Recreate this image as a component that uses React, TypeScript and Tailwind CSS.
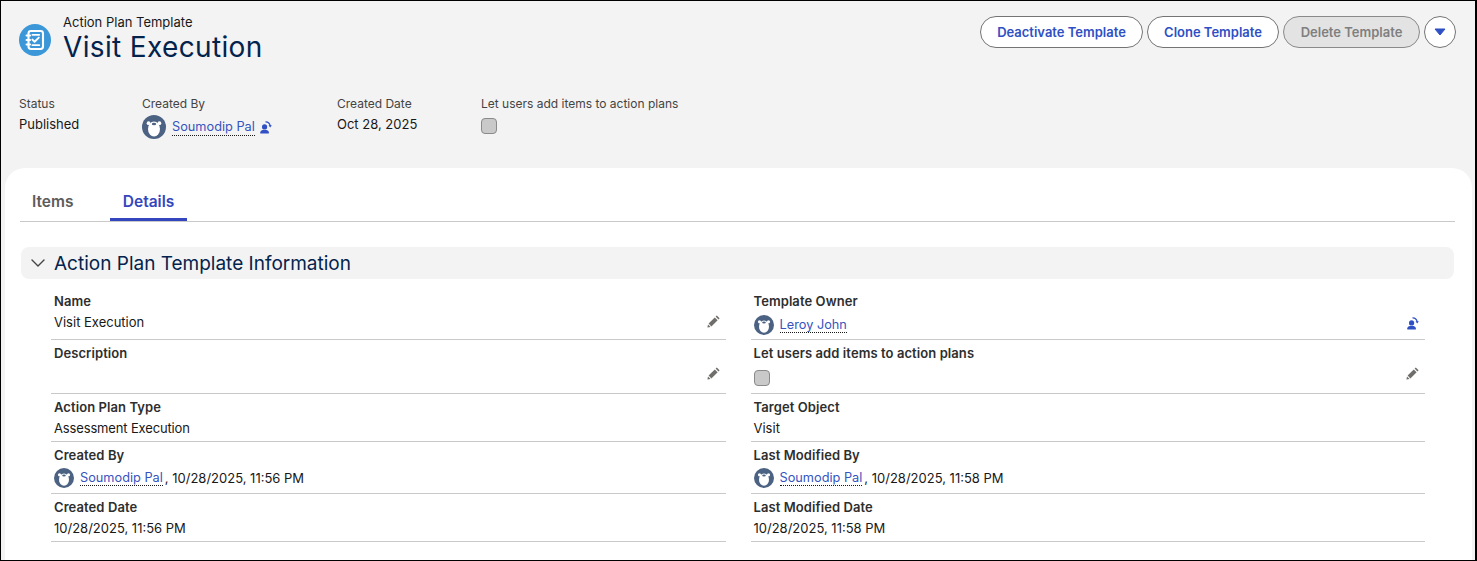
import type { ReactNode } from 'react';

const font = { fontFamily: 'Inter, "Noto Sans", sans-serif' };

function RecordIcon() {
  return (
    <svg viewBox="0 0 32 32" className="h-8 w-8 shrink-0">
      <circle cx="16" cy="16" r="16" fill="#3b97d8" />
      <rect x="9.5" y="7" width="14.5" height="18" rx="2.4" fill="none" stroke="#fff" strokeWidth="2.1" />
      <path d="M7.5 11.5h3.6M7.5 16h3.6M7.5 20.5h3.6" stroke="#fff" strokeWidth="2" strokeLinecap="round" />
      <path d="M13.4 10.8h6.8" stroke="#fff" strokeWidth="1.8" strokeLinecap="round" />
      <path d="M13.4 21.2h6.8" stroke="#fff" strokeWidth="1.8" strokeLinecap="round" />
      <path d="M13.4 15.6l2.2 2.1 4.2-4.1" fill="none" stroke="#fff" strokeWidth="1.9" strokeLinecap="round" strokeLinejoin="round" />
    </svg>
  );
}

function Avatar({ size }: { size: string }) {
  return (
    <svg viewBox="0 0 24 24" className={size + ' shrink-0'}>
      <circle cx="12" cy="12" r="12" fill="#4c6283" />
      <circle cx="6.6" cy="8.2" r="1.9" fill="#fff" />
      <circle cx="17.4" cy="8.2" r="1.9" fill="#fff" />
      <ellipse cx="12" cy="14" rx="6" ry="7.4" fill="#fff" />
      <ellipse cx="12" cy="9" rx="2.2" ry="1.2" fill="#4c6283" />
    </svg>
  );
}

function ChangeOwner() {
  return (
    <svg viewBox="0 0 14 14" className="h-[13px] w-[13px] shrink-0">
      <circle cx="6" cy="6.4" r="2.8" fill="#2f4fc4" />
      <path d="M1.4 13.4v-1.2c0-1.2 1.4-2 2.8-2.4h3.6c1.4.4 2.8 1.2 2.8 2.4v1.2z" fill="#2f4fc4" />
      <path d="M7 .9c2.6-.1 4.6 1.7 5 4.4" fill="none" stroke="#2f4fc4" strokeWidth="1.3" />
      <path d="M10.2 4.6l1.9 2.4 1.7-2.4z" fill="#2f4fc4" />
    </svg>
  );
}

function Pencil() {
  return (
    <svg viewBox="0 0 14 14" className="h-[14px] w-[14px] shrink-0">
      <path d="M9.8 1.4l2.8 2.8-1.2 1.2-2.8-2.8z" fill="#706e6b" />
      <path d="M7.8 3.4l2.8 2.8-6.2 6.2-2.8-2.8z" fill="#706e6b" />
      <path d="M1 10.4l2.6 2.6-3.2.6z" fill="#706e6b" />
    </svg>
  );
}

function UserLink({ name }: { name: string }) {
  return (
    <span className="flex items-center gap-[6px]">
      <Avatar size="h-5 w-5" />
      <span className="border-b border-dotted border-[#181818] text-[12.75px] leading-[15px] text-[#3554c0]">{name}</span>
    </span>
  );
}

function Checkbox() {
  return <span className="block h-4 w-4 rounded-[4px] border border-[#8a8a8a] bg-[#c9c9c9]" />;
}

function Field({ label, h, pt, children, icon, iconBox }: { label: string; h: string; pt?: string; children?: ReactNode; icon?: ReactNode; iconBox?: string }) {
  return (
    <div className={h + ' flex border-b border-[#c9c9c9] px-[3px] ' + (pt ?? 'pt-[1px]')}>
      <div className="min-w-0 flex-1">
        <div className="text-[13px] font-semibold leading-[16px] tracking-[0.08px] text-[#2e2e2e]">{label}</div>
        <div className="mt-[5px] flex items-center text-[13px] leading-[16px] text-[#181818]">{children}</div>
      </div>
      {icon && <div className={'flex items-center ' + (iconBox ?? 'pt-[9px] pr-[2px]')}>{icon}</div>}
    </div>
  );
}

export default function App() {
  return (
    <div style={font} className="flex h-[561px] w-full flex-col overflow-hidden border border-r-2 border-black bg-[#f3f3f3]">
      <header className="h-[167px] shrink-0 pl-[18px] pr-[19px] pt-[14px]">
        <div className="flex items-start justify-between">
          <div className="flex items-center gap-3">
            <RecordIcon />
            <div className="pb-[2px]">
              <div className="text-[13px] leading-[14px] text-[#181818]">Action Plan Template</div>
              <div className="mt-[2px] text-[28px] font-normal leading-[32px] tracking-[0.35px] text-[#03234d]">Visit Execution</div>
            </div>
          </div>
          <div className="mt-[1px] flex items-center gap-1">
            <button className="h-8 w-[163px] rounded-full border border-[#747474] bg-white pt-[1px] text-[13px] font-semibold text-[#2f4fc4]">Deactivate Template</button>
            <button className="h-8 w-[132px] rounded-full border border-[#747474] bg-white pt-[1px] text-[13px] font-semibold text-[#2f4fc4]">Clone Template</button>
            <button className="h-8 w-[137px] rounded-full border border-[#8a8a8a] bg-[#e3e3e3] pt-[1px] text-[13px] font-semibold text-[#7f7f7f]">Delete Template</button>
            <button className="flex h-8 w-8 items-center justify-center rounded-full border border-[#747474] bg-white">
              <svg viewBox="0 0 12 8" className="h-2 w-3"><path d="M1 1h10L6 7z" fill="#2f4fc4" stroke="#2f4fc4" strokeLinejoin="round" /></svg>
            </button>
          </div>
        </div>
        <div className="mt-[31px] flex">
          <div className="w-[123px]">
            <div className="text-xs leading-[16px] text-[#444]">Status</div>
            <div className="mt-[4px] text-[13px] leading-[16px] text-[#181818]">Published</div>
          </div>
          <div className="w-[195px]">
            <div className="text-xs leading-[16px] text-[#444]">Created By</div>
            <div className="mt-[3px] flex items-center gap-[4px]">
              <span className="flex items-center gap-[6px]">
                <Avatar size="h-6 w-6" />
                <span className="border-b border-dotted border-[#181818] text-[12.75px] leading-[17px] text-[#3554c0]">Soumodip Pal</span>
              </span>
              <ChangeOwner />
            </div>
          </div>
          <div className="w-[144px]">
            <div className="text-xs leading-[16px] text-[#444]">Created Date</div>
            <div className="mt-[4px] text-[13px] leading-[16px] text-[#181818]">Oct 28, 2025</div>
          </div>
          <div>
            <div className="text-xs leading-[16px] text-[#444]">Let users add items to action plans</div>
            <div className="mt-[6px]"><Checkbox /></div>
          </div>
        </div>
      </header>

      <main className="ml-[4px] mr-[3px] flex-1 rounded-t-[20px] bg-white pl-[15px] pr-[17px]">
        <div className="flex h-[54px] items-end border-b border-[#c9c9c9]">
          <div className="h-[37px] w-[90px] pl-3 text-[15.5px] font-semibold leading-[35px] text-[#5c5c5c]">Items</div>
          <div className="flex h-[37px] w-[77px] justify-center border-b-[3px] border-[#3346bd] text-[15.5px] font-semibold leading-[35px] text-[#3346bd]">Details</div>
        </div>
        <div className="ml-[1px] mr-[1px] mt-[25px] flex h-8 items-center gap-[9px] rounded-lg bg-[#f3f3f3] pl-[10px]">
          <svg viewBox="0 0 14 14" className="h-[14px] w-[14px]"><path d="M1 4l6 6 6-6" fill="none" stroke="#444" strokeWidth="1.4" strokeLinecap="round" strokeLinejoin="round" /></svg>
          <span className="pt-[1px] text-[19px] leading-6 text-[#03234d]">Action Plan Template Information</span>
        </div>
        <div className="ml-[31px] mr-[30px] mt-[13px] grid grid-cols-2 gap-x-[25px]">
          <Field label="Name" h="h-[48px]" icon={<Pencil />}>Visit Execution</Field>
          <Field label="Template Owner" h="h-[48px]" icon={<ChangeOwner />} iconBox="pt-[15px] pr-[3px]"><span className="mt-[1px]"><UserLink name="Leroy John" /></span></Field>
          <Field label="Description" h="h-[54px]" pt="pt-[5px]" icon={<Pencil />} iconBox="pt-[7px] pr-[2px]" />
          <Field label="Let users add items to action plans" h="h-[54px]" pt="pt-[5px]" icon={<Pencil />} iconBox="pt-[7px] pr-[2px]"><span className="mt-[4px]"><Checkbox /></span></Field>
          <Field label="Action Plan Type" h="h-[48px]" pt="pt-[5px]"><span className="tracking-[-0.15px]">Assessment Execution</span></Field>
          <Field label="Target Object" h="h-[48px]" pt="pt-[5px]">Visit</Field>
          <Field label="Created By" h="h-[52px]" pt="pt-[5px]"><UserLink name="Soumodip Pal" /><span className="ml-[2px]">, 10/28/2025, 11:56 PM</span></Field>
          <Field label="Last Modified By" h="h-[52px]" pt="pt-[5px]"><UserLink name="Soumodip Pal" /><span className="ml-[2px]">, 10/28/2025, 11:58 PM</span></Field>
          <Field label="Created Date" h="h-[48px]" pt="pt-[5px]">10/28/2025, 11:56 PM</Field>
          <Field label="Last Modified Date" h="h-[48px]" pt="pt-[5px]">10/28/2025, 11:58 PM</Field>
        </div>
      </main>
    </div>
  );
}
